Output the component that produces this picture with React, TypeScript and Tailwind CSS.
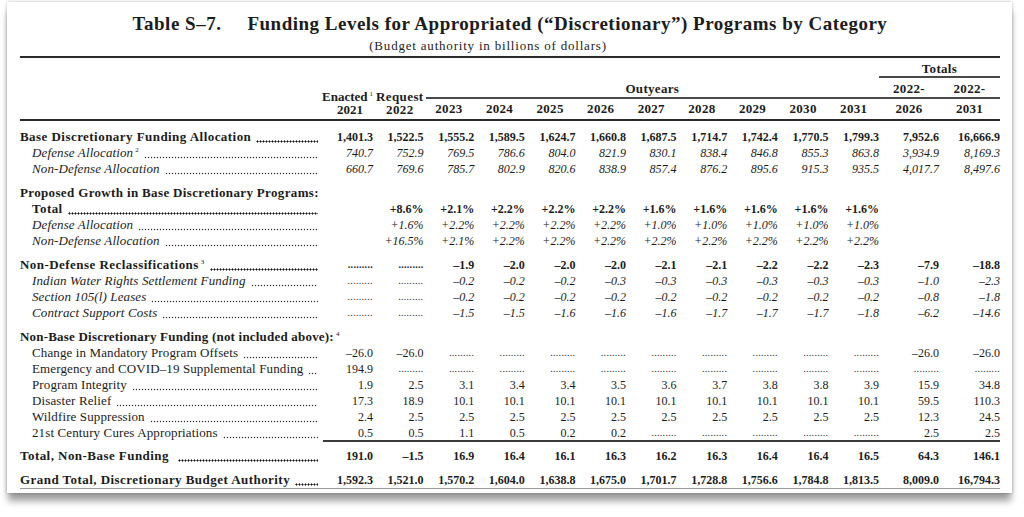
import React from "react";

const COLS = "grid grid-cols-[303px_50px_repeat(10,minmax(0,1fr))_60px_61px] grid-rows-[16px]";
const P = "P";

type Kind = "b" | "i" | "r";

function Cell({ v }: { v: string }) {
  if (v === P) {
    return (
      <div className="text-right whitespace-nowrap text-[12px] leading-4 overflow-hidden">
        <span className="text-[10px] leading-none tracking-[0.3px] relative -top-[1px]">.........</span>
      </div>
    );
  }
  return <div className="text-right whitespace-nowrap text-[12px] leading-4">{v}</div>;
}

function Row({
  label,
  kind,
  indent,
  leader = true,
  vals,
  className = "",
  leaderGap = "ml-[5px]",
  track,
}: {
  label: React.ReactNode;
  kind: Kind;
  indent?: boolean;
  leader?: boolean;
  vals?: string[];
  className?: string;
  leaderGap?: string;
  track?: string;
}) {
  const k = kind === "b" ? "font-bold" : kind === "i" ? "italic" : "";
  const tr = track ?? (kind === "b" ? "tracking-[0.45px]" : "tracking-[0.12px]");
  const dots =
    kind === "b"
      ? "bg-[radial-gradient(circle,#1c1c1c_0.85px,transparent_1.25px)]"
      : "bg-[radial-gradient(circle,#2a2a2a_0.6px,transparent_1.05px)]";
  return (
    <div className={`${COLS} h-4 leading-4 text-[12px] ${k} ${className}`}>
      <div className={`relative flex items-start h-4 min-w-0 pr-[5px] text-[13px] leading-4 ${indent ? "pl-3" : ""}`}>
        <span className={`whitespace-nowrap shrink-0 h-4 leading-4 ${tr}`}>{label}</span>
        {leader && (
          <span
            className={`${leaderGap} flex-1 min-w-0 h-[3px] mt-[11px] ${dots} bg-[length:3px_3px] bg-repeat-x`}
          />
        )}
      </div>
      {(vals ?? []).map((v, i) => (
        <Cell key={i} v={v} />
      ))}
    </div>
  );
}

function Sup({ n }: { n: string }) {
  return (
    <sup className="text-[7px] leading-none not-italic font-normal ml-[2px] -top-[5px] align-baseline">
      {n}
    </sup>
  );
}

const years = ["2023", "2024", "2025", "2026", "2027", "2028", "2029", "2030", "2031"];

export default function App() {
  return (
    <div
      className="w-[1024px] h-[517px] bg-white text-[#1c1c1c] overflow-hidden"
      style={{ fontFamily: '"Liberation Serif", "Times New Roman", serif' }}
    >
      <div className="ml-[7px] mt-[2px] w-[1005px] h-[491px] bg-white pl-[13px] pr-[12px] pt-[10px] shadow-[0_0_3px_rgba(0,0,0,0.28),0_9px_7px_-1px_rgba(0,0,0,0.38)]">
        {/* Title */}
        <div className="text-center text-[19px] leading-[24px] font-bold tracking-[0.5px] whitespace-nowrap">
          <span>Table S–7.</span>
          <span className="ml-[26px]">Funding Levels for Appropriated (“Discretionary”) Programs by Category</span>
        </div>
        <div className="mt-[3px] pr-[44px] text-center text-[13px] leading-[14px] tracking-[0.8px] whitespace-nowrap">
          (Budget authority in billions of dollars)
        </div>
        <div className="mt-[3px] h-[2px] bg-[#2a2a2a]" />

        {/* Header */}
        <div className="grid grid-cols-[303px_50px_repeat(10,minmax(0,1fr))_60px_61px] grid-rows-[20px_21px_20px] border-b-2 border-[#2a2a2a] font-bold text-[13px] tracking-[0.3px]">
          <div className="col-start-13 col-span-2 row-start-1 border-b-2 border-[#4a4a4a] flex items-center justify-center pt-1 leading-[14px]">
            Totals
          </div>
          <div className="col-start-2 row-start-2 row-span-2 flex flex-col justify-end items-end pb-[3px] leading-[13px] tracking-normal">
            <div className="whitespace-nowrap">
              Enacted<Sup n="1" />
            </div>
            <div className="pr-[10px]">2021</div>
          </div>
          <div className="col-start-3 row-start-2 row-span-2 flex flex-col justify-end items-end pb-[3px] leading-[13px] tracking-[0.4px]">
            <div className="whitespace-nowrap">Request</div>
            <div className="pr-[10px]">2022</div>
          </div>
          <div className="col-start-4 col-span-9 row-start-2 border-b-2 border-[#4a4a4a] flex items-center justify-center pt-[3px] leading-[14px] ml-[2px]">
            Outyears
          </div>
          <div className="col-start-13 row-start-2 border-b-2 border-[#4a4a4a] flex items-center justify-center pt-[3px] leading-[14px]">
            2022-
          </div>
          <div className="col-start-14 row-start-2 border-b-2 border-[#4a4a4a] flex items-center justify-center pt-[3px] leading-[14px]">
            2022-
          </div>
          {years.map((y, i) => (
            <div key={y} className="row-start-3 flex items-center justify-center leading-[14px]" style={{ gridColumnStart: 4 + i }}>
              {y}
            </div>
          ))}
          <div className="col-start-13 row-start-3 flex items-center justify-center leading-[14px]">2026</div>
          <div className="col-start-14 row-start-3 flex items-center justify-center leading-[14px]">2031</div>
        </div>

        {/* Body */}
        <div className="pt-2">
          <Row
            label="Base Discretionary Funding Allocation"
            kind="b"
            vals={["1,401.3", "1,522.5", "1,555.2", "1,589.5", "1,624.7", "1,660.8", "1,687.5", "1,714.7", "1,742.4", "1,770.5", "1,799.3", "7,952.6", "16,666.9"]}
          />
          <Row
            label={<>Defense Allocation<Sup n="2" /></>}
            kind="i"
            indent
            vals={["740.7", "752.9", "769.5", "786.6", "804.0", "821.9", "830.1", "838.4", "846.8", "855.3", "863.8", "3,934.9", "8,169.3"]}
          />
          <Row
            label="Non-Defense Allocation"
            kind="i"
            indent
            vals={["660.7", "769.6", "785.7", "802.9", "820.6", "838.9", "857.4", "876.2", "895.6", "915.3", "935.5", "4,017.7", "8,497.6"]}
          />

          <Row className="mt-2" label="Proposed Growth in Base Discretionary Programs:" kind="b" leader={false} track="tracking-[0.35px]" />
          <Row
            label="Total"
            kind="b"
            indent
            vals={["", "+8.6%", "+2.1%", "+2.2%", "+2.2%", "+2.2%", "+1.6%", "+1.6%", "+1.6%", "+1.6%", "+1.6%", "", ""]}
          />
          <Row
            label="Defense Allocation"
            kind="i"
            indent
            vals={["", "+1.6%", "+2.2%", "+2.2%", "+2.2%", "+2.2%", "+1.0%", "+1.0%", "+1.0%", "+1.0%", "+1.0%", "", ""]}
          />
          <Row
            label="Non-Defense Allocation"
            kind="i"
            indent
            vals={["", "+16.5%", "+2.1%", "+2.2%", "+2.2%", "+2.2%", "+2.2%", "+2.2%", "+2.2%", "+2.2%", "+2.2%", "", ""]}
          />

          <Row
            className="mt-2"
            label={<>Non-Defense Reclassifications<Sup n="3" /></>}
            kind="b"
            vals={[P, P, "–1.9", "–2.0", "–2.0", "–2.0", "–2.1", "–2.1", "–2.2", "–2.2", "–2.3", "–7.9", "–18.8"]}
          />
          <Row
            label="Indian Water Rights Settlement Funding"
            kind="i"
            indent
            vals={[P, P, "–0.2", "–0.2", "–0.2", "–0.3", "–0.3", "–0.3", "–0.3", "–0.3", "–0.3", "–1.0", "–2.3"]}
          />
          <Row
            label="Section 105(l) Leases"
            kind="i"
            indent
            vals={[P, P, "–0.2", "–0.2", "–0.2", "–0.2", "–0.2", "–0.2", "–0.2", "–0.2", "–0.2", "–0.8", "–1.8"]}
          />
          <Row
            label="Contract Support Costs"
            kind="i"
            indent
            vals={[P, P, "–1.5", "–1.5", "–1.6", "–1.6", "–1.6", "–1.7", "–1.7", "–1.7", "–1.8", "–6.2", "–14.6"]}
          />

          <Row
            className="mt-2"
            label={<>Non-Base Discretionary Funding (not included above):<Sup n="4" /></>}
            kind="b"
            leader={false}
            track="tracking-[0.2px]"
          />
          <Row
            label="Change in Mandatory Program Offsets"
            kind="r"
            indent
            vals={["–26.0", "–26.0", P, P, P, P, P, P, P, P, P, "–26.0", "–26.0"]}
          />
          <Row
            label="Emergency and COVID–19 Supplemental Funding"
            kind="r"
            indent
            vals={["194.9", P, P, P, P, P, P, P, P, P, P, P, P]}
          />
          <Row
            label="Program Integrity"
            kind="r"
            indent
            vals={["1.9", "2.5", "3.1", "3.4", "3.4", "3.5", "3.6", "3.7", "3.8", "3.8", "3.9", "15.9", "34.8"]}
          />
          <Row
            label="Disaster Relief"
            kind="r"
            indent
            vals={["17.3", "18.9", "10.1", "10.1", "10.1", "10.1", "10.1", "10.1", "10.1", "10.1", "10.1", "59.5", "110.3"]}
          />
          <Row
            label="Wildfire Suppression"
            kind="r"
            indent
            vals={["2.4", "2.5", "2.5", "2.5", "2.5", "2.5", "2.5", "2.5", "2.5", "2.5", "2.5", "12.3", "24.5"]}
          />
          <Row
            label="21st Century Cures Appropriations"
            kind="r"
            indent
            vals={["0.5", "0.5", "1.1", "0.5", "0.2", "0.2", P, P, P, P, P, "2.5", "2.5"]}
          />
          <div className="ml-[303px] h-[2px] bg-[#3a3a3a] -mt-[1px]" />

          <Row
            className="mt-[6px]"
            label="Total, Non-Base Funding"
            kind="b"
            leaderGap="ml-[9px]"
            vals={["191.0", "–1.5", "16.9", "16.4", "16.1", "16.3", "16.2", "16.3", "16.4", "16.4", "16.5", "64.3", "146.1"]}
          />
          <div className="mt-2 border-b border-[#9a9a9a]">
            <Row
              label="Grand Total, Discretionary Budget Authority"
              kind="b"
              vals={["1,592.3", "1,521.0", "1,570.2", "1,604.0", "1,638.8", "1,675.0", "1,701.7", "1,728.8", "1,756.6", "1,784.8", "1,813.5", "8,009.0", "16,794.3"]}
            />
          </div>
        </div>
      </div>
    </div>
  );
}
